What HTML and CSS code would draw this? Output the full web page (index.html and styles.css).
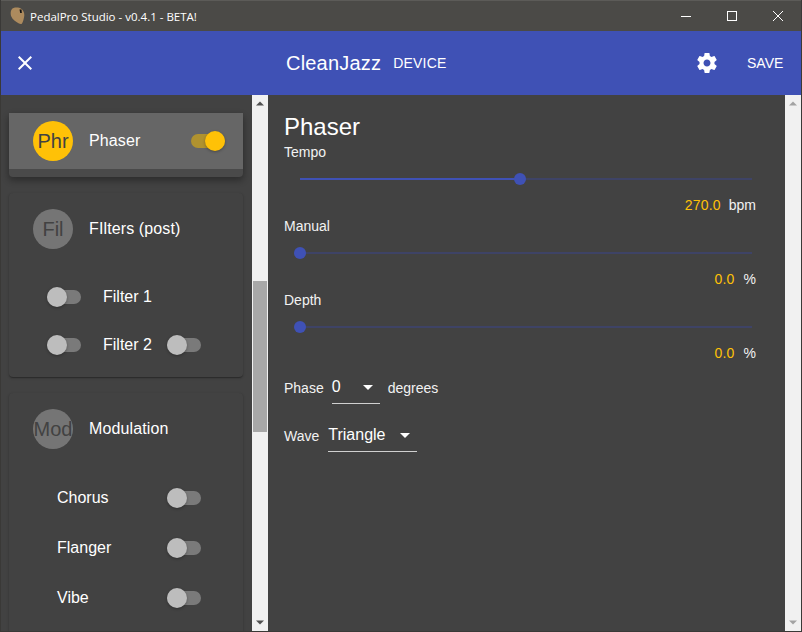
FILE: index.html
```html
<!DOCTYPE html>
<html lang="en">
<head>
<meta charset="utf-8">
<title>PedalPro Studio</title>
<link rel="stylesheet" href="styles.css">
</head>
<body>
<div class="window">
  <header class="titlebar">
    <svg class="logo" width="16" height="18" viewBox="0 0 16 18"><path fill="#ad8b5e" d="M3.500 1C6 .3 9.500.5 11.500 2c2 1.500 3 4 2.800 6.500-.2 2.500-1.300 6.500-2.300 8-.7 1-2 .7-3.500-.2C6 15 2.500 12.500 1.300 9.500.3 7 .3 2 3.500 1z"/><path fill="#111" d="M9.500 2.500h2l.3 3.500h-1.600z"/></svg>
    <span class="title-text">PedalPro Studio - v0.4.1 - BETA!</span>
    <div class="win-controls">
      <svg class="win-btn" width="46" height="30" viewBox="0 0 46 30"><path d="M18 15.500h10" stroke="#fff" fill="none"/></svg>
      <svg class="win-btn" width="46" height="30" viewBox="0 0 46 30"><rect x="18.500" y="10.500" width="9" height="9" stroke="#fff" fill="none"/></svg>
      <svg class="win-btn" width="46" height="30" viewBox="0 0 46 30"><path d="M18 10l10 10M28 10L18 20" stroke="#fff" fill="none"/></svg>
    </div>
  </header>
  <div class="appbar">
    <svg class="close-icon" width="24" height="24" viewBox="0 0 24 24"><path fill="#fff" d="M19 6.410L17.590 5 12 10.590 6.410 5 5 6.410 10.590 12 5 17.590 6.410 19 12 13.410 17.590 19 19 17.590 13.410 12z"/></svg>
    <div class="app-center"><span class="app-name">CleanJazz</span><span class="app-btn device">DEVICE</span></div>
    <svg class="gear-icon" width="24" height="24" viewBox="0 0 24 24"><path fill="#fff" d="M19.430 12.980c.04-.32.07-.64.07-.98s-.03-.66-.07-.98l2.110-1.650c.19-.15.24-.42.12-.64l-2-3.460c-.12-.22-.39-.3-.61-.22l-2.490 1c-.52-.4-1.080-.73-1.690-.98l-.38-2.650C14.460 2.180 14.250 2 14 2h-4c-.25 0-.46.180-.49.420l-.38 2.650c-.61.250-1.170.590-1.690.980l-2.490-1c-.23-.090-.49 0-.61.220l-2 3.460c-.13.220-.07.490.12.640l2.110 1.650c-.04.320-.07.650-.07.980s.03.660.07.980l-2.110 1.650c-.19.150-.24.420-.12.640l2 3.460c.12.220.39.300.61.220l2.490-1c.52.400 1.080.730 1.690.980l.38 2.650c.03.240.24.420.49.420h4c.25 0 .46-.180.49-.420l.38-2.650c.61-.250 1.170-.590 1.690-.980l2.490 1c.23.090.49 0 .61-.220l2-3.460c.12-.220.07-.490-.12-.640l-2.110-1.650zM12 15.500c-1.930 0-3.500-1.570-3.500-3.500s1.570-3.500 3.500-3.500 3.500 1.570 3.500 3.500-1.570 3.500-3.500 3.500z"/></svg>
    <span class="app-btn save">SAVE</span>
  </div>
  <div class="main">
    <nav class="side">
      <section class="card card-active">
        <div class="card-head active">
          <span class="avatar avatar-on">Phr</span>
          <span class="card-title">Phaser</span>
          <span class="switch on head-switch"><i class="knob"></i></span>
        </div>
      </section>
      <section class="card card-filters">
        <div class="card-head">
          <span class="avatar">Fil</span>
          <span class="card-title">FIlters (post)</span>
        </div>
        <div class="filter-list">
          <div class="row filter-row"><span class="switch"><i class="knob"></i></span><span class="row-label filter-label">Filter 1</span></div>
          <div class="row filter-row"><span class="switch"><i class="knob"></i></span><span class="row-label filter-label">Filter 2</span><span class="switch"><i class="knob"></i></span></div>
        </div>
      </section>
      <section class="card card-mod">
        <div class="card-head">
          <span class="avatar avatar-wide">Mod</span>
          <span class="card-title">Modulation</span>
        </div>
        <div class="mod-list">
          <div class="row mod-row"><span class="row-label mod-label">Chorus</span><span class="switch"><i class="knob"></i></span></div>
          <div class="row mod-row"><span class="row-label mod-label">Flanger</span><span class="switch"><i class="knob"></i></span></div>
          <div class="row mod-row"><span class="row-label mod-label">Vibe</span><span class="switch"><i class="knob"></i></span></div>
        </div>
      </section>
    </nav>
    <div class="scrollbar"><svg class="arrow" width="16" height="17" viewBox="0 0 16 17"><path fill="#505050" d="M4 10.500h8L8 6.500z"/></svg><div class="scroll-space scroll-left"><div class="scroll-thumb"></div></div><svg class="arrow" width="16" height="17" viewBox="0 0 16 17"><path fill="#505050" d="M4 6.500h8L8 10.500z"/></svg></div>
    <main class="content">
      <h1 class="heading">Phaser</h1>
      <div class="param">
        <div class="param-label">Tempo</div>
        <div class="slider"><div class="track"><div class="fill" style="width:48.670%"></div><i class="thumb" style="left:48.670%"></i></div></div>
        <div class="readout"><span class="value">270.0</span><span class="unit">bpm</span></div>
      </div>
      <div class="param">
        <div class="param-label">Manual</div>
        <div class="slider"><div class="track"><i class="thumb" style="left:0"></i></div></div>
        <div class="readout"><span class="value">0.0</span><span class="unit pct">%</span></div>
      </div>
      <div class="param">
        <div class="param-label">Depth</div>
        <div class="slider"><div class="track"><i class="thumb" style="left:0"></i></div></div>
        <div class="readout"><span class="value">0.0</span><span class="unit pct">%</span></div>
      </div>
      <div class="select-row first">
        <span class="sel-label">Phase</span>
        <span class="select sel-phase"><span>0</span><i class="caret"></i></span>
        <span class="sel-label">degrees</span>
      </div>
      <div class="select-row">
        <span class="sel-label">Wave</span>
        <span class="select sel-wave"><span>Triangle</span><i class="caret"></i></span>
      </div>
    </main>
    <div class="scrollbar"><svg class="arrow" width="16" height="17" viewBox="0 0 16 17"><path fill="#a3a3a3" d="M4 10.500h8L8 6.500z"/></svg><div class="scroll-space"></div><svg class="arrow" width="16" height="17" viewBox="0 0 16 17"><path fill="#a3a3a3" d="M4 6.500h8L8 10.500z"/></svg></div>
  </div>
</div>
</body>
</html>
```
FILE: styles.css
```css
* { box-sizing: border-box; }
html, body { margin: 0; padding: 0; }
body { width: 802px; height: 632px; overflow: hidden; background: #424242; font-family: "Liberation Sans", Arial, sans-serif; color: #fff; }
.window { width: 802px; height: 632px; display: flex; flex-direction: column; border: 1px solid #3a3937; border-top: 0; }

.titlebar { height: 31px; flex: none; background: #4b4a47; display: flex; align-items: center; padding-left: 9px; border-top: 1px solid #5c5b58; }
.logo { flex: none; margin-right: 4px; }
.title-text { font: 11.500px "Open Sans", sans-serif; color: #fff; }
.win-controls { margin-left: auto; display: flex; }
.win-btn { display: block; }

.appbar { height: 64px; flex: none; background: #3f51b5; display: flex; align-items: center; position: relative; }
.close-icon { margin-left: 12px; flex: none; }
.app-center { margin-left: 249px; display: flex; align-items: center; }
.app-name { font-size: 20px; letter-spacing: .2px; }
.app-btn { font-size: 14px; }
.device { margin-left: 12px; letter-spacing: .2px; }
.gear-icon { position: absolute; left: 694px; top: 20px; }
.save { position: absolute; left: 746px; top: 24px; }

.main { flex: 1; min-height: 0; display: flex; background: #424242; }
.side { width: 251px; flex: none; overflow: hidden; padding: 18px 9px 0 8px; display: flex; flex-direction: column; gap: 16px; }
.card { background: #424242; border-radius: 4px; box-shadow: 0 1px 3px rgba(0,0,0,.2), 0 1px 1px rgba(0,0,0,.14), 0 2px 1px -1px rgba(0,0,0,.12); flex: none; }
.card-active { height: 64px; box-shadow: 0 3px 6px 1px rgba(0,0,0,.3); background: #4a4a4a; }
.card-filters { height: 184px; padding-top: 16px; }
.card-mod { height: 260px; padding-top: 16px; }
.card-head { display: flex; align-items: center; height: 40px; padding-left: 24px; }
.card-head.active { height: 56px; background: #666; }
.avatar { width: 40px; height: 40px; border-radius: 50%; background: #757575; color: #424242; font-size: 20px; display: flex; align-items: center; justify-content: center; flex: none; overflow: hidden; }
.avatar-on { background: #ffc107; }
.card-title { margin-left: 16px; font-size: 16px; letter-spacing: .12px; }
.head-switch { margin-left: 51px; }

.switch { display: inline-block; position: relative; width: 34px; height: 14px; border-radius: 7px; background: #7a7a7a; flex: none; }
.switch .knob { position: absolute; left: 0; top: -3px; width: 20px; height: 20px; border-radius: 50%; background: #bdbdbd; box-shadow: 0 1px 3px rgba(0,0,0,.3); }
.switch.on { background: #b0922f; }
.switch.on .knob { left: 14px; background: #ffc107; }

.row { display: flex; align-items: center; }
.row-label { font-size: 16px; }
.filter-list { margin-top: 24px; padding-left: 38px; }
.filter-row { height: 48px; }
.filter-label { width: 64px; margin-left: 22px; }
.mod-list { margin-top: 24px; padding-left: 48px; }
.mod-row { height: 50px; }
.mod-label { width: 110px; }

.scrollbar { width: 16px; flex: none; background: #f1f1f1; display: flex; flex-direction: column; }
.arrow { display: block; flex: none; }
.scroll-space { flex: 1; padding: 169px 1px 0; }
.scroll-thumb { height: 151px; background: #a8a8a8; }

.content { flex: 1; min-width: 0; padding: 17px 16px 0; }
.heading { margin: 0 0 2px; font-size: 24px; font-weight: 400; line-height: 30px; }
.param { height: 74px; }
.param-label { font-size: 14px; line-height: 16px; color: #f2f2f2; }
.slider { height: 24px; padding: 11px 17px 0 16px; margin-top: 7px; }
.track { height: 2px; background: #3e4366; position: relative; }
.fill { height: 2px; background: #3f51b5; }
.thumb { position: absolute; top: -5px; width: 12px; height: 12px; margin-left: -6px; border-radius: 50%; background: #3f51b5; }
.readout { display: flex; justify-content: flex-end; align-items: center; height: 16px; margin-top: 6px; padding-right: 13px; font-size: 14px; }
.value { color: #ffc107; letter-spacing: .2px; }
.unit { margin-left: 8px; color: #f2f2f2; }
.pct { margin-left: 9px; }

.select-row { display: flex; align-items: center; height: 32px; margin-top: 16px; font-size: 14px; }
.select-row.first { margin-top: 6px; }
.sel-label { color: #f2f2f2; }
.select { display: flex; align-items: center; justify-content: space-between; height: 32px; font-size: 16px; border-bottom: 1px solid #d0d0d0; margin-left: 8px; margin-right: 8px; padding-bottom: 1px; }
.sel-wave { margin-left: 9px; width: 89px; padding-right: 7px; }
.sel-phase { width: 48px; padding-right: 7px; }
.caret { width: 0; height: 0; border-left: 5px solid transparent; border-right: 5px solid transparent; border-top: 5px solid #fff; }
```
